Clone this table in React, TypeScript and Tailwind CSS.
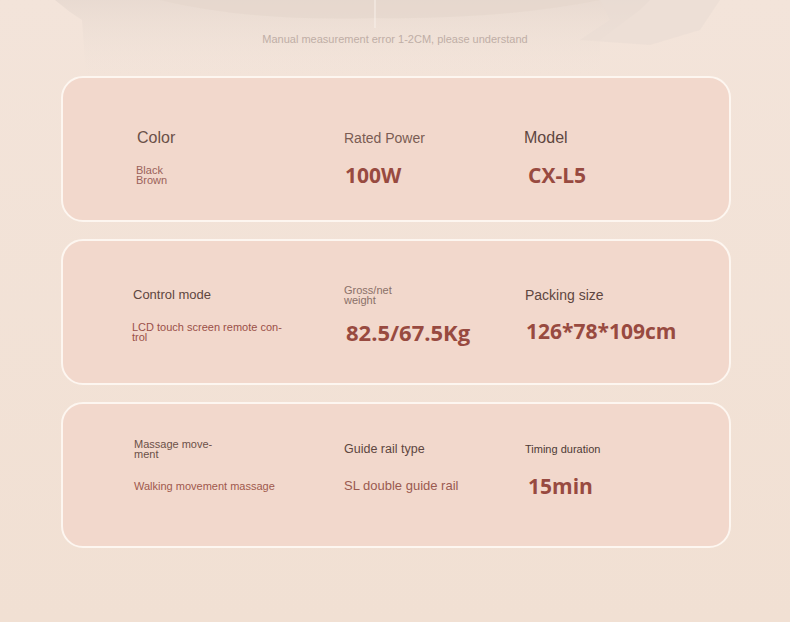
import React from "react";

const sans = { fontFamily: '"Liberation Sans", Arial, sans-serif' };
const bold = { fontFamily: '"Open Sans", "Noto Sans", sans-serif' };

function Label({ children, className = "" }: { children: React.ReactNode; className?: string }) {
  return (
    <div className={"flex items-center " + className} style={sans}>
      {children}
    </div>
  );
}

function Val({ children, className = "" }: { children: React.ReactNode; className?: string }) {
  return (
    <div className={"flex items-center font-bold text-[#984a40] " + className} style={bold}>
      {children}
    </div>
  );
}

function Card({ pt, children }: { pt: string; children: React.ReactNode }) {
  return (
    <div
      className={
        "h-[146px] rounded-[22px] border-2 border-[#fdf6f0] bg-[#f2d8cc] pl-[70px] grid grid-flow-col grid-cols-[211px_181px_1fr] grid-rows-[24px_28px] gap-y-[11px] content-start " +
        pt
      }
    >
      {children}
    </div>
  );
}

export default function App() {
  return (
    <div className="w-[790px] h-[622px] overflow-hidden bg-gradient-to-b from-[#f3e4da] to-[#f1e0d3]">
      <div className="relative h-[76px]">
        <svg className="absolute inset-0" width="790" height="76" viewBox="0 0 790 76">
          <defs>
            <linearGradient id="g1" x1="0" y1="0" x2="0" y2="1">
              <stop offset="0" stopColor="#e6d8cf" />
              <stop offset="1" stopColor="#efe2d9" stopOpacity="0" />
            </linearGradient>
          </defs>
          <path d="M55 0 L70 12 L82 20 L86 76 L600 76 L600 40 L640 10 L650 0 Z" fill="url(#g1)" opacity="0.8" />
          <path d="M160 0 Q250 22 375 18 Q500 20 600 0 Z" fill="#e4d5cc" opacity="0.6" />
          <path d="M600 0 L610 20 L580 40 L650 45 L700 30 L720 0 Z" fill="#eadcd3" opacity="0.6" />
          <line x1="375" y1="0" x2="375" y2="28" stroke="#f8f0ea" strokeWidth="1" />
        </svg>
        <div className="relative pt-[31px] text-center text-[11px] text-[#bfaea6]" style={sans}>
          Manual measurement error 1-2CM, please understand
        </div>
      </div>

      <div className="mx-[61px] w-[670px] flex flex-col gap-[17px]">
        <Card pt="pt-[48px]">
          <Label className="ml-[4px] text-[16px] text-[#6b5048]">Color</Label>
          <Label className="ml-[3px] text-[11px] leading-[10px] text-[#9a625a]">
            <div>
              Black
              <br />
              Brown
            </div>
          </Label>
          <Label className="text-[14px] text-[#7a5c53]">Rated Power</Label>
          <Val className="ml-[1px] mt-[1px] text-[21px]">100W</Val>
          <Label className="-ml-[1px] text-[16px] text-[#5e463f]">Model</Label>
          <Val className="ml-[3px] mt-[1px] text-[21px]">CX-L5</Val>
        </Card>

        <Card pt="pt-[42px]">
          <Label className="text-[13px] text-[#5e463f]">Control mode</Label>
          <Label className="-ml-[1px] text-[11px] leading-[10px] text-[#9a5048]">
            <div>
              LCD touch screen remote con-
              <br />
              trol
            </div>
          </Label>
          <Label className="text-[11px] leading-[10px] text-[#8a7068]">
            <div>
              Gross/net
              <br />
              weight
            </div>
          </Label>
          <Val className="ml-[2px] text-[22px]">82.5/67.5Kg</Val>
          <Label className="text-[14px] text-[#5e463f]">Packing size</Label>
          <Val className="ml-[1px] text-[21px]">126*78*109cm</Val>
        </Card>

        <Card pt="pt-[33px]">
          <Label className="ml-[1px] text-[11px] leading-[10px] text-[#6b5048]">
            <div>
              Massage move-
              <br />
              ment
            </div>
          </Label>
          <Label className="ml-[1px] text-[11px] text-[#a0584c]">Walking movement massage</Label>
          <Label className="text-[12.5px] text-[#5e463f]">Guide rail type</Label>
          <Label className="text-[13px] text-[#9a5a50]">SL double guide rail</Label>
          <Label className="text-[11px] text-[#4e3a35]">Timing duration</Label>
          <Val className="ml-[3px] mt-[1px] text-[21px]">15min</Val>
        </Card>
      </div>
    </div>
  );
}
